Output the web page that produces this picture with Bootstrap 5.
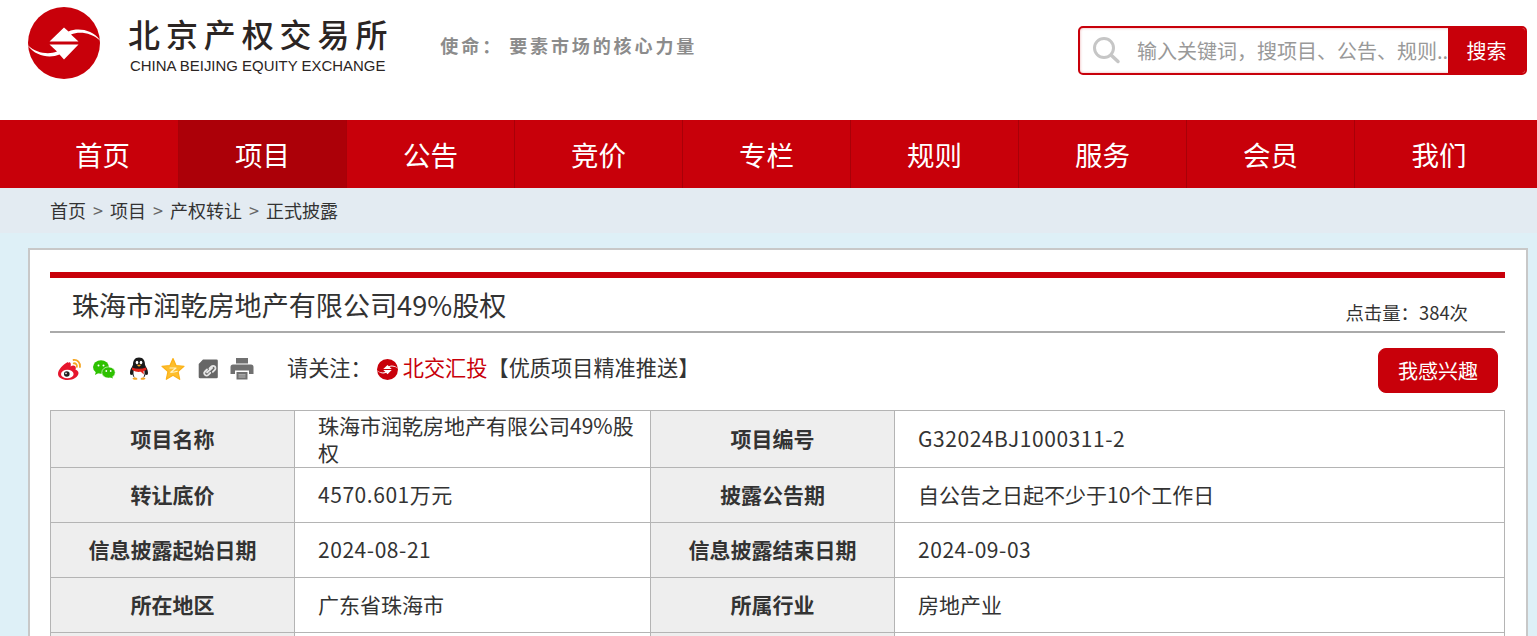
<!DOCTYPE html>
<html lang="zh-CN">
<head>
  <meta charset="utf-8" />
  <meta name="viewport" content="width=device-width, initial-scale=1" />
  <title>珠海市润乾房地产有限公司49%股权</title>
  <link href="https://cdn.jsdelivr.net/npm/bootstrap@5.3.3/dist/css/bootstrap.min.css" rel="stylesheet" />
  <style>
    body {
      font-family: "Noto Sans CJK SC", "Liberation Sans", sans-serif;
      background-color: #def0f7;
      color: #333;
    }
    .top-head { height: 120px; background: #fff; padding-left: 20px; padding-right: 10px; }
    .brand-logo { display: block; margin-top: 0; }
    .brand-text { margin-left: 18px; padding-top: 11px; }
    .brand-cn { font-size: 32px; line-height: 44px; letter-spacing: 5.9px; color: #2b2523; font-weight: 500; white-space: nowrap; }
    .brand-en { font-family: "Liberation Sans", sans-serif; font-size: 14.95px; line-height: 20px; color: #2b2523; margin-top: 1px; margin-left: 2px; white-space: nowrap; }
    .brand-slogan { margin-left: 47px; margin-top: 30px; font-size: 18px; line-height: 30px; letter-spacing: 2.9px; color: #8c8c8c; font-weight: 700; white-space: nowrap; }
    .slogan-colon { letter-spacing: 9px; }
    .search-box { width: 449px; height: 49px; margin-top: 26px; border: 2px solid #c8000a; border-radius: 5px; overflow: hidden; background: #fff; box-shadow: inset 0 0 3px rgba(200,0,10,.35); }
    .search-ico { margin-left: 11px; flex: none; }
    .search-box .form-control { border: 0; box-shadow: none; background: transparent; font-size: 20px; padding: 0 0 0 16px; min-width: 0; color: #333; }
    .search-box .form-control::placeholder { color: #999; opacity: 1; }
    .search-btn { flex: none; width: 77px; border: 0; border-radius: 0; background: #c8000a; color: #fff; font-size: 20px; padding: 0; }
    .main-nav { height: 68px; background: #c8000a; padding-left: 27px; }
    .main-nav a { display: block; width: 168px; line-height: 68px; text-align: center; color: #fff; font-size: 27.5px; text-decoration: none; border-right: 1px solid #a80008; }
    .main-nav a:first-child { width: 152px; }
    .main-nav a.on { background: #ac0008; }
    .main-nav a:last-child { border-right: 0; }
    .crumb-bar { height: 45px; background: #e3ebf2; padding-left: 50px; }
    .crumb-bar .breadcrumb { --bs-breadcrumb-divider-color: #666; --bs-breadcrumb-item-padding-x: 7px; font-size: 18px; line-height: 45px; margin: 0; }
    .crumb-bar .breadcrumb-item + .breadcrumb-item::before { content: ">"; }
    .crumb-bar a { color: #333; text-decoration: none; }
    .crumb-bar .breadcrumb-item.active { color: #333; }
    .detail-panel { width: 1500px; margin: 15px 0 0 28px; background: #fff; border: 2px solid #c8c8c8; padding: 22px 21px 40px 20px; }
    .title-row { border-top: 6px solid #c8000a; border-bottom: 2px solid #aaa; height: 61px; padding-left: 22px; padding-right: 37px; }
    .title-row h1 { font-size: 27.1px; line-height: 40px; font-weight: 400; margin: 7px 0 0; color: #333; }
    .hit-count { font-size: 18.4px; line-height: 26px; margin-top: 21px; }
    .share-row { height: 77px; padding-left: 8px; padding-right: 7px; }
    .share-icons { gap: 10.4px; margin-top: 24px; }
    .follow-text { font-size: 21.2px; line-height: 30px; margin-left: 33px; margin-top: 19px; white-space: nowrap; }
    .follow-text a { color: #c8000a; text-decoration: none; }
    .follow-text svg { vertical-align: -4px; margin-right: 5px; margin-left: 5px; }
    .interest-btn { width: 120px; height: 45px; padding: 0; margin-top: 15px; background: #c8000a; border-color: #c8000a; color: #fff; border-radius: 8px; font-size: 20px; }
    .info-table { table-layout: fixed; width: 1454px; margin: 0; --bs-table-border-color: #b4b4b4; }
    .info-table.table > :not(caption) > * > * { padding: 0 15px 2px 23px; font-size: 21px; line-height: 27px; vertical-align: middle; color: #333; height: 55px; }
    .info-table.table > :not(caption) > .first-line > * { height: 57px; }
    .info-table.table > :not(caption) > .first-line > .two-lines { padding-bottom: 0; }
    .info-table.table > :not(caption) > * > th { background: #eee; text-align: center; padding: 0 0 2px; font-weight: 700; }
    .num-val { letter-spacing: .55px; }
  </style>
</head>
<body>

  <svg width="0" height="0" class="d-block">
    <symbol id="jys-logo" viewBox="28 7 72 72">
      <circle cx="64" cy="43" r="36" fill="#c8000a" />
      <path fill="#fff" d="M64 27.5 49.5 41.5H78.5L71 34.5C80 31 92 33 100.5 41 93 29.5 78 27.5 68.5 31.5Z" />
      <path fill="#fff" d="M64 59.5 78.5 44.5H49.5L57 51.5C48 55 36 53 27.5 45 35 56.5 50 58.5 59.5 54.5Z" />
    </symbol>
  </svg>

  <header class="top-head d-flex align-items-start">
    <svg class="brand-logo" width="90" height="85" viewBox="20 0 90 85"><use href="#jys-logo" x="28" y="7" width="72" height="72" /></svg>
    <div class="brand-text">
      <div class="brand-cn">北京产权交易所</div>
      <div class="brand-en">CHINA BEIJING EQUITY EXCHANGE</div>
    </div>
    <div class="brand-slogan">使命<span class="slogan-colon">：</span>要素市场的核心力量</div>
    <form class="search-box d-flex ms-auto">
      <svg class="search-ico" width="30" height="45" viewBox="0 0 30 45">
        <circle cx="13" cy="20" r="9.5" fill="none" stroke="#c6c6c6" stroke-width="3" />
        <path d="M20 27 27 33.5" stroke="#c6c6c6" stroke-width="3.5" stroke-linecap="round" />
      </svg>
      <input type="text" class="form-control" placeholder="输入关键词，搜项目、公告、规则..." />
      <button type="button" class="btn search-btn">搜索</button>
    </form>
  </header>

  <nav class="main-nav d-flex">
    <a href="#">首页</a>
    <a href="#" class="on">项目</a>
    <a href="#">公告</a>
    <a href="#">竞价</a>
    <a href="#">专栏</a>
    <a href="#">规则</a>
    <a href="#">服务</a>
    <a href="#">会员</a>
    <a href="#">我们</a>
  </nav>

  <div class="crumb-bar">
    <ol class="breadcrumb">
      <li class="breadcrumb-item"><a href="#">首页</a></li>
      <li class="breadcrumb-item"><a href="#">项目</a></li>
      <li class="breadcrumb-item"><a href="#">产权转让</a></li>
      <li class="breadcrumb-item active">正式披露</li>
    </ol>
  </div>

  <main class="detail-panel">
    <div class="title-row d-flex justify-content-between">
      <h1>珠海市润乾房地产有限公司49%股权</h1>
      <div class="hit-count">点击量：384次</div>
    </div>

    <div class="share-row d-flex align-items-start">
      <div class="share-icons d-flex align-items-center">
        <!-- weibo -->
        <svg width="24" height="24" viewBox="0 0 24 24">
          <path fill="#e6162d" d="M10 5C5 7.500 0 12.500 0 17c0 3.500 4.500 6 9.500 6 6.500 0 11-3.500 11-7 0-2-2-3-3-3.300.5-1.500.5-2.800-.3-3.500-1.200-1-3.200-.6-4.600.2.500-1.800.2-3.200-.6-3.800-.6-.4-1.300-.3-2 .4Z" />
          <ellipse cx="9.300" cy="17" rx="6.300" ry="4.300" fill="#fff" />
          <circle cx="8.800" cy="17" r="2.800" fill="#222" />
          <circle cx="8" cy="16.400" r=".8" fill="#fff" />
          <path d="M15.500 3c3.800-.5 7 2.500 6.500 7M15.700 6.300c2-.3 3.500 1.200 3.200 3.500" fill="none" stroke="#f5a623" stroke-width="1.800" stroke-linecap="round" />
        </svg>
        <!-- wechat -->
        <svg width="24" height="24" viewBox="0 0 24 24">
          <ellipse cx="9" cy="10" rx="8" ry="6.800" fill="#2dc100" />
          <path fill="#2dc100" d="M4 14 3 18l4.500-2.500Z" />
          <ellipse cx="16.500" cy="15.500" rx="6.700" ry="5.600" fill="#2dc100" stroke="#fff" stroke-width=".6" />
          <path fill="#2dc100" d="M20 19l1 2.500-3.500-1.500Z" />
          <circle cx="6.500" cy="8.500" r="1" fill="#fff" />
          <circle cx="11.500" cy="8.500" r="1" fill="#fff" />
          <circle cx="14.300" cy="14" r=".9" fill="#fff" />
          <circle cx="18.700" cy="14" r=".9" fill="#fff" />
        </svg>
        <!-- qq -->
        <svg width="24" height="24" viewBox="0 0 24 24">
          <path fill="#1a1a1a" d="M12 .5C7.500.5 6 4 6 7.500c0 1.500-3 4-3 8.500 0 2 1.200 2.500 2.500 1.500.5 1.500 1 2.500 2 3h9c1-.5 1.500-1.500 2-3 1.300 1 2.500.5 2.500-1.500 0-4.500-3-7-3-8.500C18 4 16.500.5 12 .5Z" />
          <path fill="#fff" d="M7 12.500c3.300 1 6.700 1 10 0 1 3 .7 6-1 8.500H8c-1.700-2.500-2-5.500-1-8.500Z" />
          <path fill="#e2231a" d="M5 10.500c4.500 1.800 9.500 1.800 14 0l.5 2.300c-1 .7-2 1-3 1.300l.3 3.400-3-2.700c-2.800.4-5.500.1-8.800-2Z" />
          <ellipse cx="10" cy="5.500" rx="1.300" ry="1.700" fill="#fff" />
          <ellipse cx="14" cy="5.500" rx="1.300" ry="1.700" fill="#fff" />
          <path fill="#f5a623" d="M9.500 7.800h5L12 9.800Z" />
          <path fill="#f5a623" d="M5.500 21.500c1-1.200 4-1.400 5 .4-1 1.400-4.300 1.300-5-.4ZM18.500 21.500c-1-1.200-4-1.400-5 .4 1 1.400 4.300 1.300 5-.4Z" />
        </svg>
        <!-- qzone star -->
        <svg width="24" height="24" viewBox="0 0 24 24">
          <path fill="#fdbe2d" stroke="#fbb117" stroke-width="1.200" stroke-linejoin="round" d="M12 1.500 15 8.500l8 .8-6 5.200 1.700 7.800L12 18.300l-6.700 4 1.700-7.800-6-5.200 8-.8Z" />
          <path d="M9 11h6l-5.200 4.300c2.200 0 4.500-.3 6.500-1" fill="none" stroke="#fff3c4" stroke-width="1.200" stroke-linecap="round" stroke-linejoin="round" />
        </svg>
        <!-- link -->
        <svg width="24" height="24" viewBox="0 0 24 24">
          <path fill="#666" d="M7 2.500H20.500a1.300 1.300 0 0 1 1.300 1.300V20a1.300 1.300 0 0 1-1.300 1.300H4a1.300 1.300 0 0 1-1.300-1.300V7Z" />
          <path d="M11 12.500 9 14.500a2.300 2.300 0 0 0 3.300 3.300l2-2M13.500 11.500l2-2A2.300 2.300 0 0 1 18.800 12.800l-2 2M11 15.500 16.200 10.800" fill="none" stroke="#e6e6e6" stroke-width="1.800" stroke-linecap="round" />
        </svg>
        <!-- print -->
        <svg width="24" height="24" viewBox="0 0 24 24">
          <path fill="#707070" d="M6 1h12v5.500H6Z" />
          <path fill="#707070" d="M3 7.500h18A2.500 2.500 0 0 1 23.500 10v7H19v-3.500H5V17H.5v-7A2.500 2.500 0 0 1 3 7.500Z" />
          <path fill="#707070" d="M6.500 15h11v7.500h-11Z" />
          <path stroke="#bbb" stroke-width="1.200" d="M8.500 17.800h7M8.500 20h7" />
        </svg>
      </div>
      <div class="follow-text">请关注：<svg width="21" height="21"><use href="#jys-logo" width="21" height="21" /></svg><a href="#">北交汇投</a>【优质项目精准推送】</div>
      <button type="button" class="btn interest-btn ms-auto">我感兴趣</button>
    </div>

    <table class="table table-bordered info-table">
      <colgroup>
        <col style="width: 244px" />
        <col style="width: 356px" />
        <col style="width: 244px" />
        <col style="width: 610px" />
      </colgroup>
      <tbody>
        <tr class="first-line">
          <th>项目名称</th>
          <td class="two-lines">珠海市润乾房地产有限公司49%股权</td>
          <th>项目编号</th>
          <td class="num-val">G32024BJ1000311-2</td>
        </tr>
        <tr>
          <th>转让底价</th>
          <td class="num-val">4570.601万元</td>
          <th>披露公告期</th>
          <td>自公告之日起不少于10个工作日</td>
        </tr>
        <tr>
          <th>信息披露起始日期</th>
          <td class="num-val">2024-08-21</td>
          <th>信息披露结束日期</th>
          <td class="num-val">2024-09-03</td>
        </tr>
        <tr>
          <th>所在地区</th>
          <td>广东省珠海市</td>
          <th>所属行业</th>
          <td>房地产业</td>
        </tr>
        <tr>
          <th></th>
          <td></td>
          <th></th>
          <td></td>
        </tr>
      </tbody>
    </table>
  </main>

  <script src="https://cdn.jsdelivr.net/npm/bootstrap@5.3.3/dist/js/bootstrap.bundle.min.js"></script>
</body>
</html>
